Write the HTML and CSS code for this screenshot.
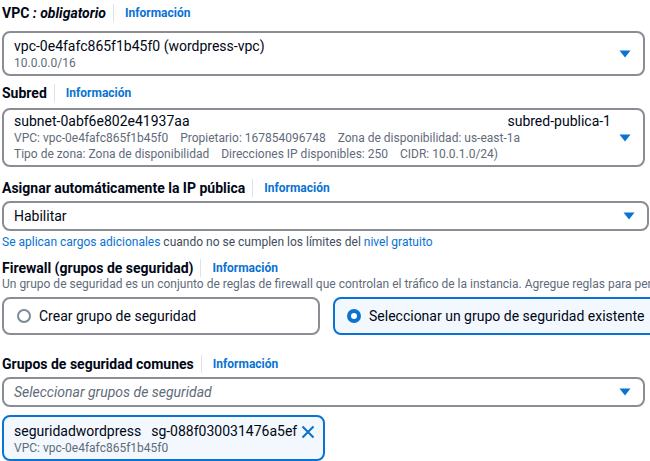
FILE: index.html
```html
<!DOCTYPE html>
<html lang="es">
<head>
<meta charset="utf-8">
<link rel="stylesheet" href="styles.css">
</head>
<body>
<div class="page">
  <div class="field f-vpc">
    <div class="label"><span class="ltext">VPC <i>: obligatorio</i></span><span class="sep"></span><a class="info">Información</a></div>
    <div class="select s-vpc">
      <div class="opt">
        <div class="main">vpc-0e4fafc865f1b45f0 (wordpress-vpc)</div>
        <div class="sub">10.0.0.0/16</div>
      </div>
      <svg class="caret" width="12" height="8" viewBox="0 0 12 8"><path d="M0.5 0.5h11L6 7.5z" fill="#0972d3"/></svg>
    </div>
  </div>

  <div class="field f-subnet">
    <div class="label"><span class="ltext">Subred</span><span class="sep"></span><a class="info">Información</a></div>
    <div class="select s-subnet">
      <div class="opt">
        <div class="main row"><span>subnet-0abf6e802e41937aa</span><span class="tag">subred-publica-1</span></div>
        <div class="sub"><span>VPC: vpc-0e4fafc865f1b45f0</span><span>Propietario: 167854096748</span><span>Zona de disponibilidad: us-east-1a</span></div>
        <div class="sub"><span>Tipo de zona: Zona de disponibilidad</span><span>Direcciones IP disponibles: 250</span><span>CIDR: 10.0.1.0/24)</span></div>
      </div>
      <svg class="caret" width="12" height="8" viewBox="0 0 12 8"><path d="M0.5 0.5h11L6 7.5z" fill="#0972d3"/></svg>
    </div>
  </div>

  <div class="field f-ip">
    <div class="label"><span class="ltext">Asignar automáticamente la IP pública</span><span class="sep"></span><a class="info">Información</a></div>
    <div class="select s-ip">
      <div class="opt"><div class="main">Habilitar</div></div>
      <svg class="caret" width="12" height="8" viewBox="0 0 12 8"><path d="M0.5 0.5h11L6 7.5z" fill="#0972d3"/></svg>
    </div>
    <div class="hint"><a class="link">Se aplican cargos adicionales</a> cuando no se cumplen los límites del <a class="link">nivel gratuito</a></div>
  </div>

  <div class="field f-fw">
    <div class="label"><span class="ltext">Firewall (grupos de seguridad)</span><span class="sep"></span><a class="info">Información</a></div>
    <div class="desc">Un grupo de seguridad es un conjunto de reglas de firewall que controlan el tráfico de la instancia. Agregue reglas para permitir</div>
    <div class="tiles">
      <div class="tile"><span class="radio"></span><span>Crear grupo de seguridad</span></div>
      <div class="tile on"><span class="radio"></span><span>Seleccionar un grupo de seguridad existente</span></div>
    </div>
  </div>

  <div class="field f-sg">
    <div class="label"><span class="ltext">Grupos de seguridad comunes</span><span class="sep"></span><a class="info">Información</a></div>
    <div class="select s-sg">
      <div class="opt"><div class="main ph">Seleccionar grupos de seguridad</div></div>
      <svg class="caret" width="12" height="8" viewBox="0 0 12 8"><path d="M0.5 0.5h11L6 7.5z" fill="#0972d3"/></svg>
    </div>
    <div class="token">
      <div class="tinfo">
        <div class="main"><span>seguridadwordpress</span><span class="gap">sg-088f030031476a5ef</span></div>
        <div class="sub">VPC: vpc-0e4fafc865f1b45f0</div>
      </div>
      <svg class="x" width="14" height="14" viewBox="0 0 14 14"><path d="M1.5 1.5l11 11M12.5 1.5l-11 11" stroke="#0972d3" stroke-width="2" fill="none"/></svg>
    </div>
  </div>
</div>
</body>
</html>
```

FILE: styles.css
```css
html, body { margin: 0; padding: 0; background: #fff; }
body {
  font-family: Roboto, "Open Sans", Arial, sans-serif;
  color: #000716;
  font-size: 14px;
  overflow: hidden;
  width: 650px;
  height: 461px;
}
.page { padding: 2px 0 0 2px; }
.label {
  display: flex;
  align-items: center;
  height: 22px;
  font-weight: 700;
  font-size: 14px;
  line-height: 22px;
  white-space: nowrap;
}
.label i { font-weight: 700; }
.sep {
  display: inline-block;
  width: 1px;
  height: 18px;
  background: #dfe2e6;
  margin: 0 11px 0 7px;
}
.info {
  color: #0972d3;
  font-size: 12px;
  font-weight: 700;
}
.select {
  box-sizing: border-box;
  border: 2px solid #8c8c94;
  border-radius: 8px;
  display: flex;
  align-items: center;
  padding: 0 12px 0 10px;
}
.opt { flex: 1; min-width: 0; }
.main { font-size: 14px; line-height: 17px; white-space: nowrap; }
.sub { font-size: 12px; line-height: 16px; color: #5f6b7a; white-space: nowrap; }
.caret { flex: none; margin-left: 8px; }
.f-vpc .label { margin-bottom: 7px; }
.s-vpc { width: 643px; height: 45px; padding-top: 1px; }
.f-subnet { margin-top: 6px; }
.f-subnet .label { margin-bottom: 4px; }
.s-subnet { width: 643px; height: 59px; }
.row { display: flex; justify-content: space-between; padding-right: 0; }
.s-subnet .sub span + span { margin-left: 12px; }
.f-ip { margin-top: 10px; }
.f-ip .label { margin-bottom: 2px; }
.s-ip { width: 647px; height: 30px; }
.hint { font-size: 12px; line-height: 16px; color: #414d5c; margin-top: 3px; white-space: nowrap; }
.link { color: #0972d3; }
.f-fw { margin-top: 7px; }
.desc { font-size: 12px; line-height: 16px; color: #5f6b7a; white-space: nowrap; overflow: hidden; margin-top: -3px; }
.tiles { display: flex; gap: 13px; margin-top: 5px; }
.tile {
  flex: none;
  box-sizing: border-box;
  height: 38px;
  border: 2px solid #8c8c94;
  border-radius: 8px;
  display: flex;
  align-items: center;
  padding-left: 13px;
  font-size: 14px;
  white-space: nowrap;
}
.tile:first-child { width: 318px; }
.tile.on { width: 330px; border-color: #0972d3; background: #f2f8fd; padding-left: 12px; }
.radio {
  box-sizing: border-box;
  width: 14px;
  height: 14px;
  border-radius: 50%;
  border: 2px solid #7d8998;
  margin-right: 8px;
  flex: none;
}
.tile.on .radio { border: 4px solid #0972d3; background: #fff; }
.f-sg { margin-top: 18px; }
.f-sg .label { margin-bottom: 2px; }
.s-sg { width: 643px; height: 30px; }
.ph { font-style: italic; color: #5f6b7a; }
.token {
  box-sizing: border-box;
  margin-top: 8px;
  width: 323px;
  height: 46px;
  border: 2px solid #0972d3;
  border-radius: 8px;
  background: #f2f8fd;
  display: flex;
  align-items: flex-start;
  padding: 6px 8px 0 10px;
}
.tinfo { flex: 1; }
.gap { margin-left: 10px; }
.x { margin-top: 2px; flex: none; }
```
